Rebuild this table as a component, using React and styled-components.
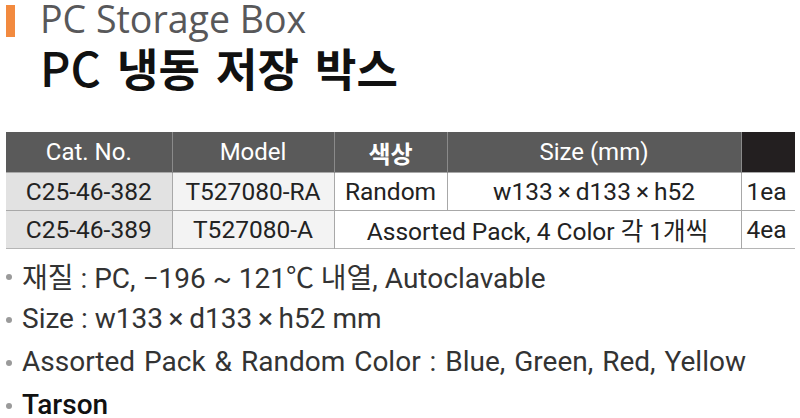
import React from "react";
import styled, { createGlobalStyle } from "styled-components";

const GlobalStyle = createGlobalStyle`
  html, body {
    margin: 0;
    padding: 0;
    background: #ffffff;
  }
  body {
    width: 800px;
    height: 418px;
    overflow: hidden;
    font-family: Roboto, "Noto Sans CJK KR", sans-serif;
  }
`;

const Page = styled.div`
  display: flex;
  flex-direction: column;
  padding: 0 5px 0 6px;
`;

const TitleRow = styled.div`
  display: flex;
  align-items: flex-start;
  gap: 25px;
  height: 42px;
`;

const Accent = styled.span`
  width: 9px;
  height: 32px;
  margin-top: 5px;
  background: #f28a3f;
`;

const SubTitle = styled.h2`
  margin: 0;
  font-family: "Open Sans", sans-serif;
  font-weight: 400;
  font-size: 37.5px;
  line-height: 38px;
  color: #58585a;
  white-space: nowrap;
`;

const Title = styled.h1`
  margin: 0 0 0 34px;
  height: 50px;
  font-family: "Noto Sans CJK KR", sans-serif;
  font-weight: 700;
  font-size: 45px;
  line-height: 50px;
  word-spacing: 6px;
  color: #111;
  white-space: nowrap;
`;

const Latin = styled.span`
  font-weight: 500;
  font-size: 47px;
`;

const Table = styled.table`
  margin-top: 40px;
  border-collapse: collapse;
  width: 789px;
  table-layout: fixed;
  font-size: 24.5px;
  color: #222;
  border-bottom: 1px solid #b5b5b5;
`;

const Head = styled.th`
  height: 40px;
  padding: 0;
  font-size: 24px;
  font-weight: ${(p) => (p.$bold ? 700 : 400)};
  color: #fff;
  background: ${(p) => (p.$dark ? "#231f20" : "#5a5a5a")};
  border-left: 1px solid #8a8a8a;
  &:first-child {
    border-left: none;
  }
`;

const Cell = styled.td`
  height: 37px;
  padding: 0;
  text-align: ${(p) => (p.$left ? "left" : "center")};
  padding-left: ${(p) => (p.$left ? "5px" : "0")};
  background: ${(p) => p.$bg || "#fff"};
  border-left: 1px solid #a8a8a8;
  border-top: 1px solid #a8a8a8;
  white-space: nowrap;
  &:first-child {
    border-left: none;
  }
`;

const List = styled.ul`
  list-style: none;
  margin: 5px 0 0;
  padding: 0;
  display: flex;
  flex-direction: column;
`;

const Item = styled.li`
  display: flex;
  align-items: center;
  gap: 10px;
  height: 43px;
  flex-shrink: 0;
  font-size: 28px;
  word-spacing: ${(p) => (p.$wide ? "2px" : "0")};
  color: ${(p) => (p.$strong ? "#111" : "#333")};
  font-weight: ${(p) => (p.$strong ? 500 : 400)};
  white-space: nowrap;
  &::before {
    content: "";
    width: 6px;
    height: 6px;
    border-radius: 50%;
    background: #9a9a9a;
    margin-top: 3px;
  }
`;

const rows = [
  { cat: "C25-46-382", model: "T527080-RA", color: "Random", size: "w133\u2009×\u2009d133\u2009×\u2009h52", qty: "1ea" },
  { cat: "C25-46-389", model: "T527080-A", color: "Assorted Pack, 4 Color 각 1개씩", qty: "4ea" },
];

export default function App() {
  return (
    <>
      <GlobalStyle />
      <Page>
        <TitleRow>
          <Accent />
          <SubTitle>PC Storage Box</SubTitle>
        </TitleRow>
        <Title>
          <Latin>PC</Latin> 냉동 저장 박스
        </Title>
        <Table>
          <colgroup>
            <col style={{ width: 166 }} />
            <col style={{ width: 162 }} />
            <col style={{ width: 113 }} />
            <col style={{ width: 294 }} />
            <col style={{ width: 54 }} />
          </colgroup>
          <thead>
            <tr>
              <Head>Cat. No.</Head>
              <Head>Model</Head>
              <Head $bold>색상</Head>
              <Head>Size (mm)</Head>
              <Head $dark />
            </tr>
          </thead>
          <tbody>
            {rows.map((r) => (
              <tr key={r.cat}>
                <Cell $bg="#e2e2e2">{r.cat}</Cell>
                <Cell $bg="#f3f3f3">{r.model}</Cell>
                {r.size ? (
                  <>
                    <Cell>{r.color}</Cell>
                    <Cell>{r.size}</Cell>
                  </>
                ) : (
                  <Cell colSpan={2}>{r.color}</Cell>
                )}
                <Cell $left>{r.qty}</Cell>
              </tr>
            ))}
          </tbody>
        </Table>
        <List>
          <Item>재질 : PC, −196 ~ 121℃ 내열, Autoclavable</Item>
          <Item>Size : w133&thinsp;×&thinsp;d133&thinsp;×&thinsp;h52 mm</Item>
          <Item $wide>Assorted Pack &amp; Random Color : Blue, Green, Red, Yellow</Item>
          <Item $strong>Tarson</Item>
        </List>
      </Page>
    </>
  );
}
